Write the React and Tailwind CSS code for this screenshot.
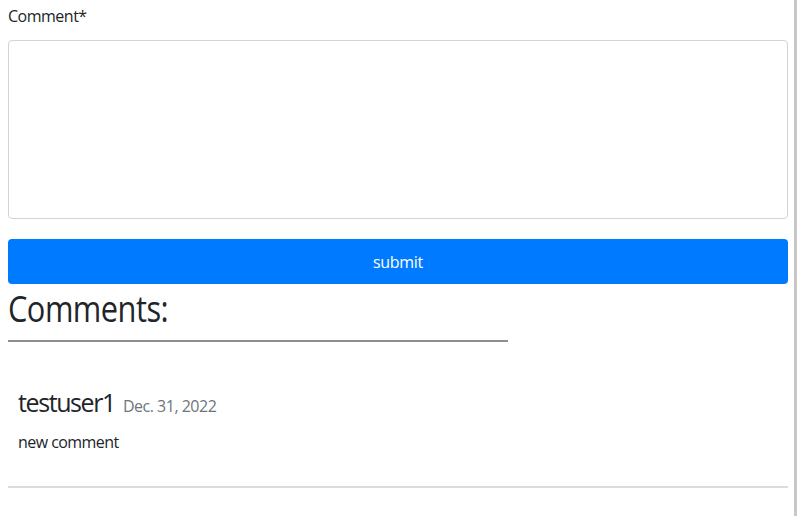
export default function App() {
  return (
    <div className="relative w-[798px] h-[516px] overflow-hidden bg-white text-[#212529]" style={{ fontFamily: '"Open Sans", "Noto Sans", sans-serif' }}>
      <div className="absolute right-[1px] top-0 h-full w-[3px] bg-[#c8c8c8]" />
      <div className="w-[796px] px-2">
        <label className="block pt-[4px] text-[16px] leading-[24px] tracking-[-0.5px]">Comment*</label>
        <div className="mt-[12px] h-[179px] w-[780px] rounded border border-[#ced4da] bg-white" />
        <button className="mt-[20px] block h-[45px] w-[780px] rounded bg-[#007bff] text-[16px] tracking-[-0.3px] text-white">submit</button>
        <h2 className="mt-[2px] h-[46px] text-[36px] leading-[46px]">
          <span className="inline-block origin-left scale-x-[0.855] tracking-[-0.6px]">Comments:</span>
        </h2>
        <div className="mt-[8px] h-[2px] w-[500px] bg-[#8f8f8f]" />
        <div className="px-[10px] pt-[45px]">
          <div className="flex items-baseline gap-2">
            <span className="text-[25px] leading-[30px] tracking-[-1.4px]">testuser1</span>
            <span className="text-[16px] tracking-[-0.5px] text-[#6c757d]">Dec. 31, 2022</span>
          </div>
          <p className="mt-[12px] text-[16px] leading-[24px] tracking-[-0.55px]">new comment</p>
        </div>
        <div className="mt-[32px] h-[2px] w-[780px] bg-[#dcdcdc]" />
      </div>
    </div>
  );
}
